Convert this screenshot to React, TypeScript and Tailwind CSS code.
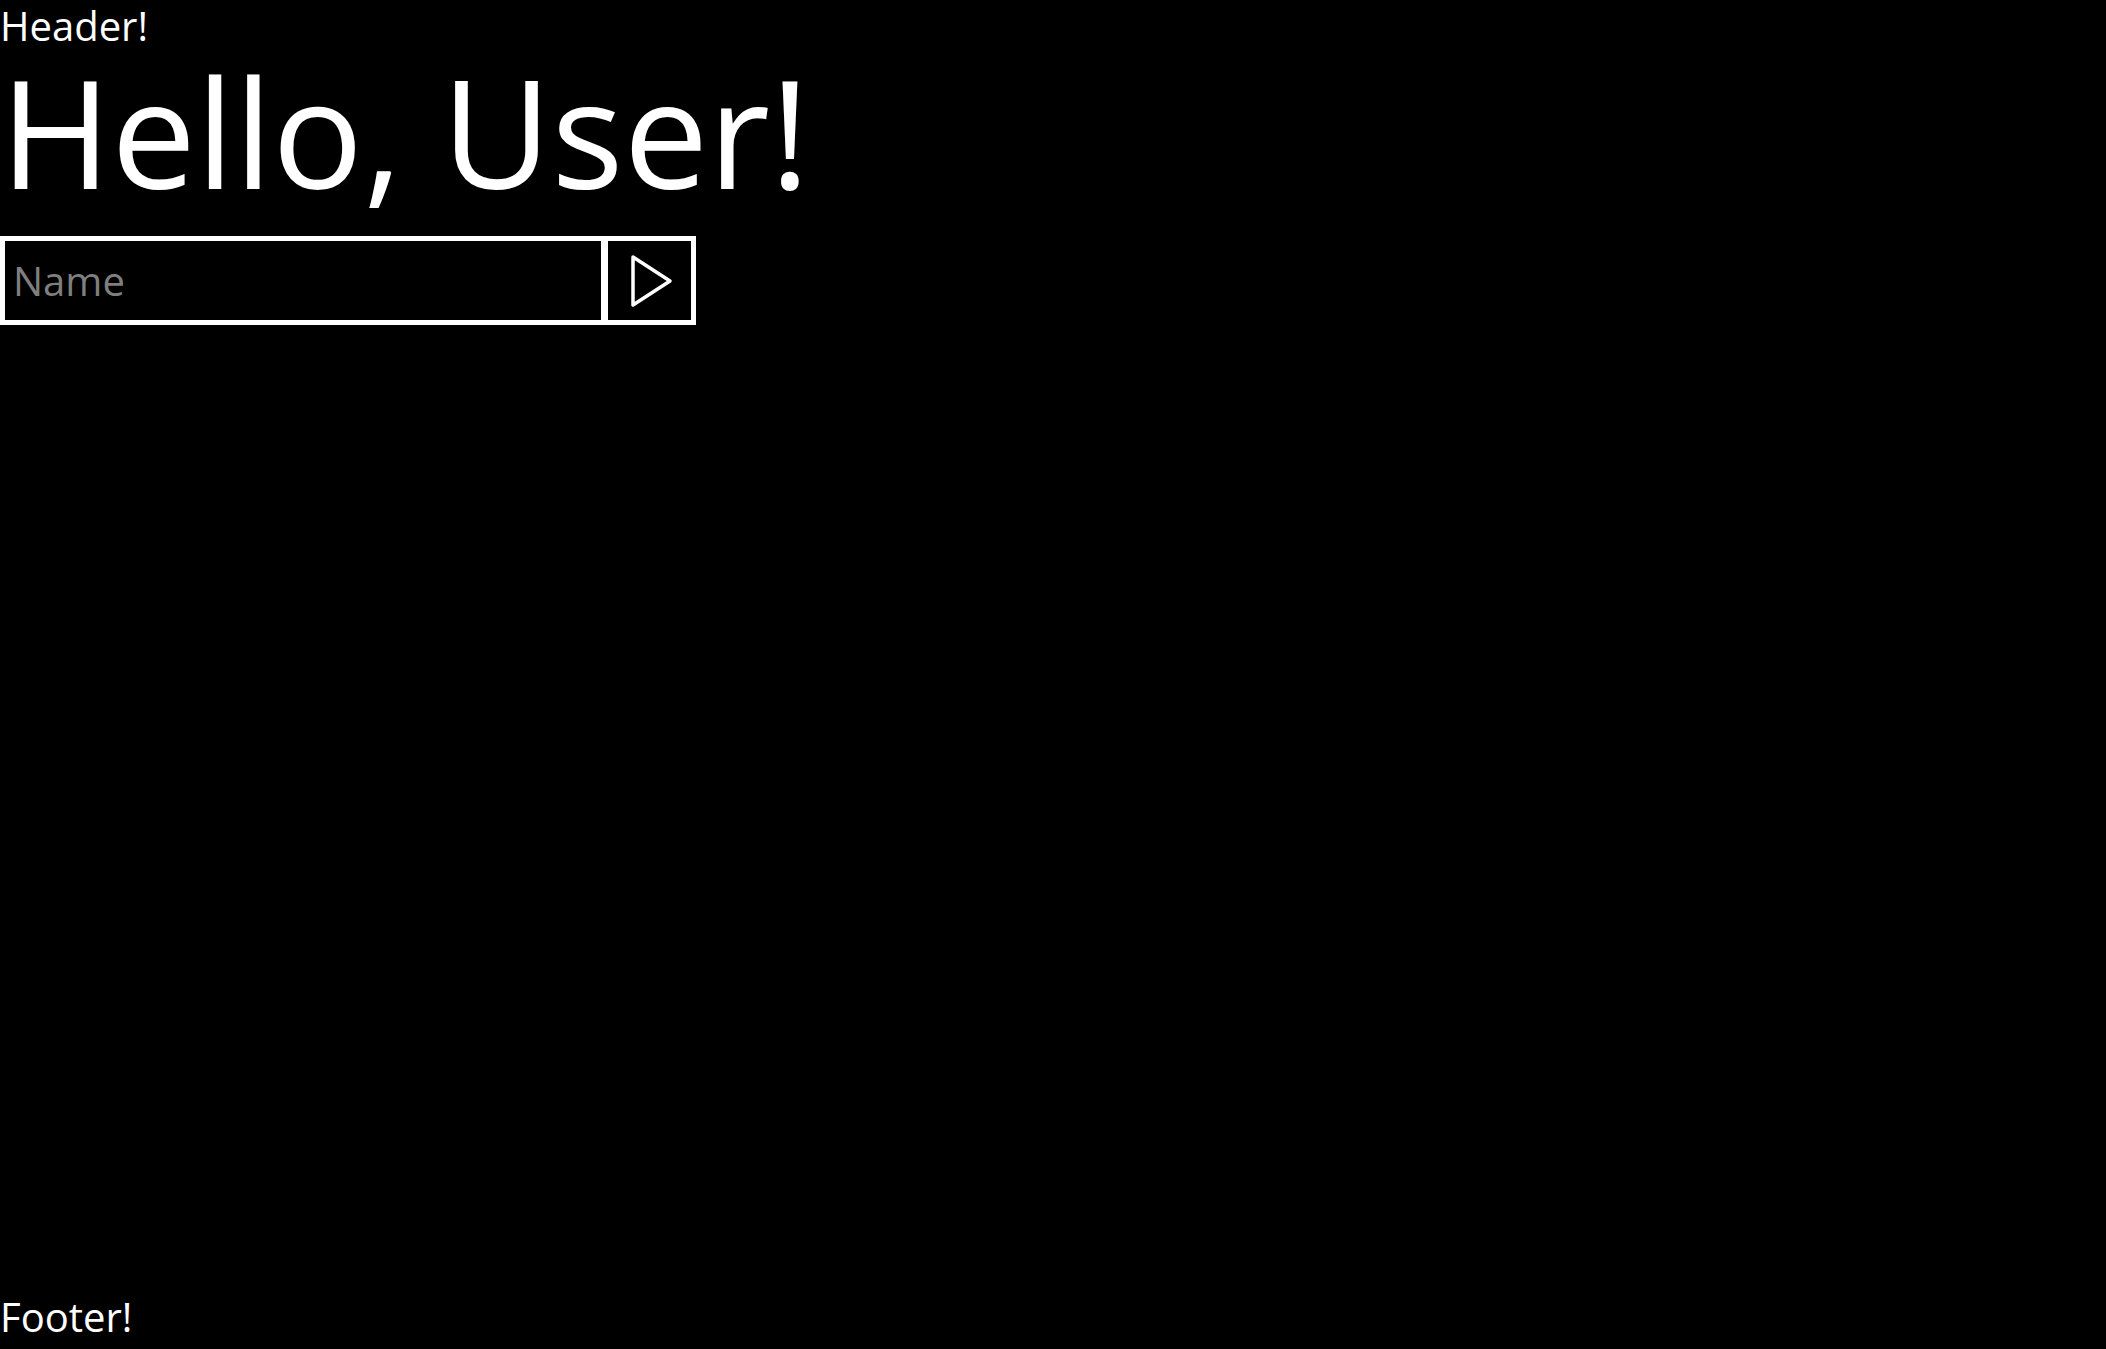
// Simple greeting page: header, big hello, name input with a send button, footer
const font = { fontFamily: '"Open Sans", "Noto Sans", sans-serif' };

const PlayIcon = () => (
  <svg width="44" height="54" viewBox="0 0 44 54" fill="none">
    <path d="M4 3 L41 27 L4 51 Z" stroke="white" strokeWidth="3.5" strokeLinejoin="round" />
  </svg>
);

export default function App() {
  return (
    <div className="h-screen overflow-hidden bg-black text-white flex flex-col" style={font}>
      <header className="text-[40px] leading-[52px]">Header!</header>
      <main className="flex-1">
        <h1 className="text-[151px] leading-[158px] font-normal">Hello, User!</h1>
        <div className="mt-[26px] flex h-[89px]">
          <input
            type="text"
            placeholder="Name"
            className="w-[606px] h-full border-[5px] border-white bg-black pl-[8px] text-[40px] text-white outline-none placeholder:text-[#7f7f7f]"
          />
          <button className="-ml-[3px] w-[93px] h-full border-[5px] border-white bg-black flex items-center justify-center pl-[2px]">
            <PlayIcon />
          </button>
        </div>
      </main>
      <footer className="text-[40px] leading-[48px] pb-[8px]">Footer!</footer>
    </div>
  );
}
